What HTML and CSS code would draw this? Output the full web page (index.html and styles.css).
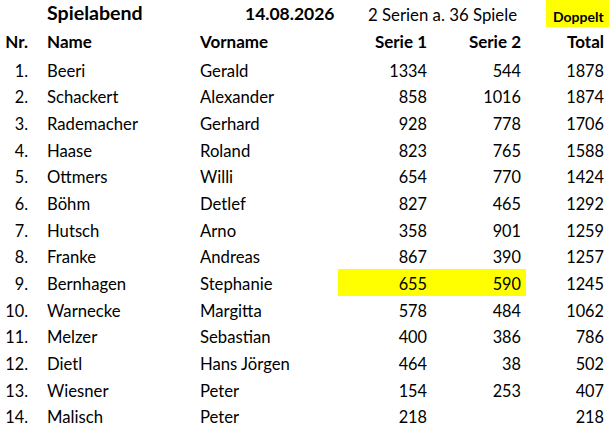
FILE: index.html
```html
<!DOCTYPE html>
<html lang="de">
<head>
<meta charset="utf-8">
<title>Spielabend</title>
<link rel="stylesheet" href="styles.css">
</head>
<body>
<div class="sheet">
  <div class="row title-row">
    <div class="cell c-name title">Spielabend</div>
    <div class="cell c-date">14.08.2026</div>
    <div class="cell c-info">2 Serien a. 36 Spiele</div>
    <div class="cell c-badge"><span class="badge">Doppelt</span></div>
  </div>
  <div class="row head-row">
    <div class="cell c-nr">Nr.</div>
    <div class="cell c-name">Name</div>
    <div class="cell c-first">Vorname</div>
    <div class="cell c-num">Serie 1</div>
    <div class="cell c-num">Serie 2</div>
    <div class="cell c-gap"></div>
    <div class="cell c-num">Total</div>
  </div>
  <div class="row"><div class="cell c-nr">1.</div><div class="cell c-name">Beeri</div><div class="cell c-first">Gerald</div><div class="cell c-num">1334</div><div class="cell c-num">544</div><div class="cell c-gap"></div><div class="cell c-num">1878</div></div>
  <div class="row"><div class="cell c-nr">2.</div><div class="cell c-name">Schackert</div><div class="cell c-first">Alexander</div><div class="cell c-num">858</div><div class="cell c-num">1016</div><div class="cell c-gap"></div><div class="cell c-num">1874</div></div>
  <div class="row"><div class="cell c-nr">3.</div><div class="cell c-name">Rademacher</div><div class="cell c-first">Gerhard</div><div class="cell c-num">928</div><div class="cell c-num">778</div><div class="cell c-gap"></div><div class="cell c-num">1706</div></div>
  <div class="row"><div class="cell c-nr">4.</div><div class="cell c-name">Haase</div><div class="cell c-first">Roland</div><div class="cell c-num">823</div><div class="cell c-num">765</div><div class="cell c-gap"></div><div class="cell c-num">1588</div></div>
  <div class="row"><div class="cell c-nr">5.</div><div class="cell c-name">Ottmers</div><div class="cell c-first">Willi</div><div class="cell c-num">654</div><div class="cell c-num">770</div><div class="cell c-gap"></div><div class="cell c-num">1424</div></div>
  <div class="row"><div class="cell c-nr">6.</div><div class="cell c-name">Böhm</div><div class="cell c-first">Detlef</div><div class="cell c-num">827</div><div class="cell c-num">465</div><div class="cell c-gap"></div><div class="cell c-num">1292</div></div>
  <div class="row"><div class="cell c-nr">7.</div><div class="cell c-name">Hutsch</div><div class="cell c-first">Arno</div><div class="cell c-num">358</div><div class="cell c-num">901</div><div class="cell c-gap"></div><div class="cell c-num">1259</div></div>
  <div class="row"><div class="cell c-nr">8.</div><div class="cell c-name">Franke</div><div class="cell c-first">Andreas</div><div class="cell c-num">867</div><div class="cell c-num">390</div><div class="cell c-gap"></div><div class="cell c-num">1257</div></div>
  <div class="row"><div class="cell c-nr">9.</div><div class="cell c-name">Bernhagen</div><div class="cell c-first">Stephanie</div><div class="cell c-num hl">655</div><div class="cell c-num hl">590</div><div class="cell c-gap"></div><div class="cell c-num">1245</div></div>
  <div class="row"><div class="cell c-nr">10.</div><div class="cell c-name">Warnecke</div><div class="cell c-first">Margitta</div><div class="cell c-num">578</div><div class="cell c-num">484</div><div class="cell c-gap"></div><div class="cell c-num">1062</div></div>
  <div class="row"><div class="cell c-nr">11.</div><div class="cell c-name">Melzer</div><div class="cell c-first">Sebastian</div><div class="cell c-num">400</div><div class="cell c-num">386</div><div class="cell c-gap"></div><div class="cell c-num">786</div></div>
  <div class="row"><div class="cell c-nr">12.</div><div class="cell c-name">Dietl</div><div class="cell c-first">Hans Jörgen</div><div class="cell c-num">464</div><div class="cell c-num">38</div><div class="cell c-gap"></div><div class="cell c-num">502</div></div>
  <div class="row"><div class="cell c-nr">13.</div><div class="cell c-name">Wiesner</div><div class="cell c-first">Peter</div><div class="cell c-num">154</div><div class="cell c-num">253</div><div class="cell c-gap"></div><div class="cell c-num">407</div></div>
  <div class="row"><div class="cell c-nr">14.</div><div class="cell c-name">Malisch</div><div class="cell c-first">Peter</div><div class="cell c-num">218</div><div class="cell c-num"></div><div class="cell c-gap"></div><div class="cell c-num">218</div></div>
</div>
</body>
</html>
```

FILE: styles.css
```css
html, body {
  margin: 0;
  padding: 0;
  background: #ffffff;
}

body {
  font-family: Lato, "Noto Sans", sans-serif;
  font-size: 16.3px;
  color: #000000;
}

.sheet {
  width: 610px;
}

.row {
  display: grid;
  grid-template-columns: 32px 166px 140px 94px 94px 20px 63px;
  height: 26.667px;
}

.cell {
  box-sizing: border-box;
  height: 100%;
  padding-top: 4px;
  line-height: 22.667px;
  white-space: nowrap;
}

.c-nr {
  text-align: right;
  padding-right: 4px;
}

.c-name {
  padding-left: 15px;
  font-size: 16.7px;
}

.c-first {
  padding-left: 2px;
  font-size: 16.7px;
}

.c-num {
  text-align: right;
  padding-right: 5px;
}

.hl {
  background: #ffff00;
}

/* title row */
.title-row {
  height: 26.7px;
}

.title-row .cell {
  line-height: 23.7px;
}

.title-row .title {
  grid-column: 2;
  font-size: 19.6px;
  font-weight: 700;
  padding-top: 1px;
}

.title-row .c-date {
  grid-column: 3;
  padding-left: 47px;
  padding-top: 2px;
  font-size: 17.5px;
  font-weight: 700;
}

.title-row .c-info {
  grid-column: 4 / 7;
  padding-left: 30px;
  padding-top: 2.5px;
  font-size: 16.8px;
}

.title-row .c-badge {
  grid-column: 7;
  padding: 0;
}

.badge {
  display: block;
  box-sizing: border-box;
  height: 100%;
  background: #ffff00;
  font-size: 14px;
  font-weight: 700;
  line-height: 16.8px;
  padding-top: 9px;
  padding-left: 7px;
}

/* header row */
.head-row {
  height: 29px;
  font-weight: 700;
}

.head-row .cell {
  font-size: 17px;
  padding-top: 2.5px;
  line-height: 25px;
}
```
